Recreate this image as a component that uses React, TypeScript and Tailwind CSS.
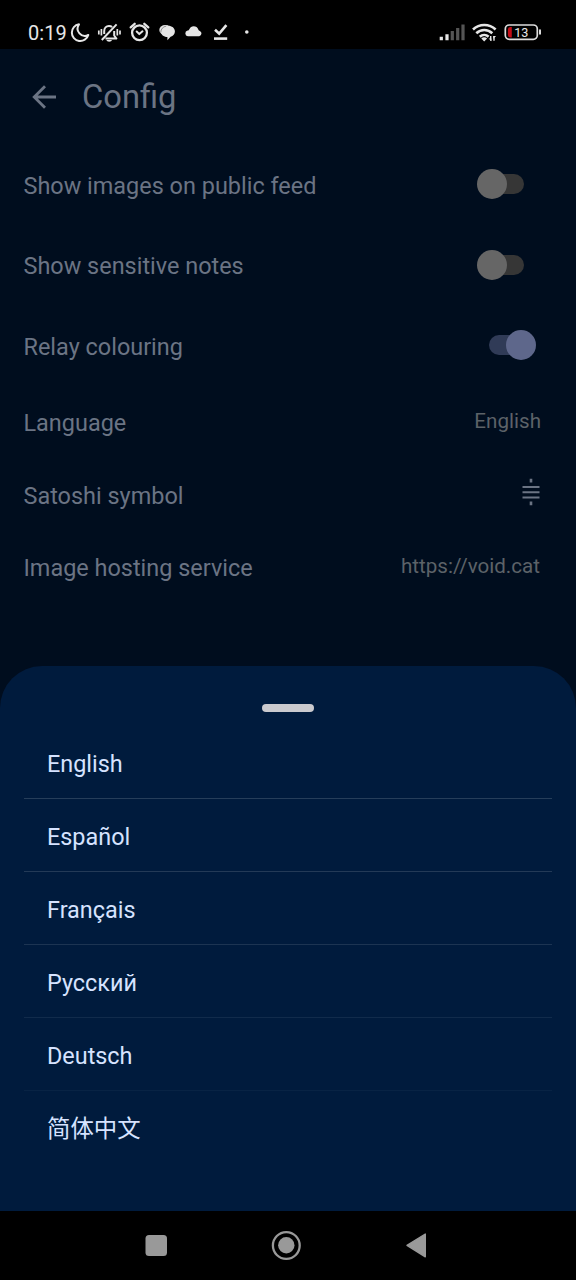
import type { ReactNode } from 'react';

function StatusBar() {
  return (
    <header className="flex h-[49px] shrink-0 items-start bg-black pl-[28px] text-[#e6e6e6]">
      <span className="mt-[20px] w-[42px] whitespace-nowrap text-[20px] leading-[26px] tracking-[0.1px]">0:19</span>
      <svg className="mt-[14px]" width="190" height="35" viewBox="70 14 190 35" fill="none" stroke="#e6e6e6" strokeWidth="2" strokeLinecap="round" strokeLinejoin="round">
        <path d="M79 24.3A8.4 8.4 0 1 0 88.3 35 7.3 7.3 0 0 1 79 24.3Z" />
        <g strokeLinecap="butt">
          <path d="M104.2 34V31.2c0-3 2-5.2 4.8-5.2 1.3 0 2.3.4 3.1 1.1M114.2 31V35.5l2.2 3H105.5" />
          <path d="M101.8 40L116.6 24.4" />
          <path d="M101.4 29v6.5M98.8 30.5v4M117.3 29v6.5M120 30.5v4" strokeWidth="1.7" />
        </g>
        <path d="M106.3 40h5.8a3 2.2 0 0 1-5.8 0Z" fill="#e6e6e6" stroke="none" />
        <circle cx="139.5" cy="32.8" r="7.4" strokeWidth="2.3" />
        <path d="M130.7 27.4l4-3.6M148.3 27.4l-4-3.6" strokeWidth="2.3" />
        <path d="M136.7 31.5l2.6 2.6 3.2-2.8" />
        <g stroke="none" fill="#e6e6e6">
          <ellipse cx="165.3" cy="30" rx="6" ry="5" />
          <path d="M168 25.8c4 0 6.9 2.4 6.9 5.6 0 2.5-1.7 4.6-4.3 5.4L167.4 40.2V37c-3.8-.2-6.5-2.5-6.5-5.6 0-3.2 3-5.6 7.1-5.6Z" />
          <path d="M187.8 36.3a2.9 2.9 0 0 1-.2-5.7c.9-.1 1.3-.3 1.7-1.3.8-1.9 2.4-3 4.4-3 2.2 0 3.8 1.2 4.6 3.2.3.8.9 1.1 1.6 1.4a2.9 2.9 0 0 1-.7 5.4Z" />
          <path d="M214 37.3h13.2v2.6H214z" />
          <circle cx="246.8" cy="32" r="1.8" />
        </g>
        <path d="M160.8 32c0-3 2-5.2 5-5.8" stroke="#555" strokeWidth="0.6" />
        <path d="M215 29.7l4.2 4 7.2-8.5" strokeWidth="2.6" strokeLinecap="butt" strokeLinejoin="miter" />
      </svg>
      <svg className="mt-[14px] ml-auto" width="146" height="35" viewBox="430 14 146 35" fill="none">
        <path d="M441.3 36.7v3.5M447 34.2v6" stroke="#e6e6e6" strokeWidth="3.2" />
        <path d="M452.3 31v9.2M457.7 28v12.2M463 24.5v15.7" stroke="#555" strokeWidth="3.2" />
        <g stroke="#e6e6e6" strokeWidth="2.6">
          <path d="M473 29.5c6.4-6 16.2-6 22.6 0" />
          <path d="M476.3 33.2c4.6-4.3 11.4-4.3 16 0" />
          <path d="M479.8 36.8c2.6-2.4 6.3-2.4 8.8 0" />
        </g>
        <path d="M481.3 38.4c1.7-1.6 4.1-1.6 5.8 0l-2.9 3Z" fill="#e6e6e6" />
        <path d="M490.7 36v4.8M494 36v4.8" stroke="#e6e6e6" strokeWidth="1.4" />
        <path d="M488.6 38.4h2.8v2.8ZM493.3 38.8V36h2.8Z" fill="#e6e6e6" />
        <rect x="505.3" y="25" width="32" height="14.3" rx="4" stroke="#dcdcdc" strokeWidth="1.7" />
        <path d="M511.8 27v10.4h-1.4a2.5 2.5 0 0 1-2.5-2.5v-5.4a2.5 2.5 0 0 1 2.5-2.5Z" fill="#c40c16" />
        <path d="M540 30.2v3.5" stroke="#dcdcdc" strokeWidth="2" strokeLinecap="round" />
        <text x="521.3" y="36.8" fill="#e6e6e6" fontSize="12.6" textAnchor="middle">13</text>
      </svg>
    </header>
  );
}

function Toggle({ on = false }: { on?: boolean }) {
  return on ? (
    <span className="mr-[40px] mb-[3px] flex h-[29px] w-[47px] items-center">
      <span className="flex h-[20px] w-[38px] items-center rounded-full bg-[#303b57]">
        <span className="ml-[17px] size-[30px] shrink-0 rounded-full bg-[#5e678b]" />
      </span>
    </span>
  ) : (
    <span className="mr-[52px] mb-[3px] flex h-[29px] w-[47px] items-center justify-end">
      <span className="flex h-[20px] w-[38px] items-center justify-end rounded-full bg-[#363636]">
        <span className="mr-[17px] size-[30px] shrink-0 rounded-full bg-[#666666]" />
      </span>
    </span>
  );
}

function Row({ label, tall = false, children }: { label: string; tall?: boolean; children: ReactNode }) {
  return (
    <div className={tall ? 'flex h-[80.5px] items-center justify-between pl-[23.5px]' : 'flex h-[72.5px] items-center justify-between pl-[23.5px]'}>
      <span className="text-[23.45px] leading-[32px] text-[#6b7484]">{label}</span>
      {children}
    </div>
  );
}

const languages = [
  { name: 'English', line: 'border-[#263e5a]' },
  { name: 'Español', line: 'border-[#233a57]' },
  { name: 'Français', line: 'border-[#1c3452]' },
  { name: 'Русский', line: 'border-[#112b4b]' },
  { name: 'Deutsch', line: 'border-[#082344]' },
  { name: '简体中文', line: 'border-transparent' },
];

export default function App() {
  return (
    <div className="flex h-[1280px] w-[576px] flex-col overflow-hidden bg-[#000d1e] font-['Roboto','Noto_Sans_CJK_SC',sans-serif]">
      <StatusBar />
      <main className="h-[617px] shrink-0">
        <div className="flex h-[96.5px] items-center pl-[32px]">
          <svg width="25" height="24" viewBox="0 0 25 24" fill="none" stroke="#6b7484" strokeWidth="2.8">
            <path d="M13 1.2L2.2 12 13 22.8M2.5 12H24" />
          </svg>
          <h1 className="ml-[25px] text-[32.7px] leading-[40px] text-[#6b7484]">Config</h1>
        </div>
        <Row label="Show images on public feed" tall><Toggle /></Row>
        <Row label="Show sensitive notes" tall><Toggle /></Row>
        <Row label="Relay colouring" tall><Toggle on /></Row>
        <Row label="Language">
          <span className="mr-[35px] mb-[5px] text-[20.6px] leading-[28px] text-[#5c6268]">English</span>
        </Row>
        <Row label="Satoshi symbol">
          <svg className="mr-[36.5px] mb-[7px]" width="18" height="28" viewBox="0 0 18 28" stroke="#6b7484" strokeWidth="2">
            <path d="M.5 9H17.5M.5 14.2H17.5M.5 19.4H17.5" />
            <path d="M9 .8V4.6M9 23.4V27.2" strokeWidth="2.6" />
          </svg>
        </Row>
        <Row label="Image hosting service">
          <span className="mr-[36px] mb-[5px] text-[20.6px] leading-[28px] text-[#5c6268]">https://void.cat</span>
        </Row>
      </main>
      <section className="h-[545px] shrink-0 rounded-t-[42px] bg-[#001b3d] px-[24px] pt-[38px]">
        <div className="mx-auto h-[8px] w-[52px] rounded-full bg-[#cacace]" />
        <ul className="mt-[14px]">
          {languages.map(({ name, line }) => (
            <li key={name} className={`flex h-[73px] items-center border-b pt-[4px] pl-[23px] text-[23.4px] leading-[32px] text-[#d6e3ff] ${line}`}>
              {name}
            </li>
          ))}
        </ul>
      </section>
      <nav className="h-[69px] shrink-0 bg-black">
        <svg width="576" height="69" viewBox="0 1211 576 69" fill="#999">
          <rect x="145.5" y="1235" width="21.5" height="21" rx="3.5" />
          <circle cx="286.3" cy="1245.5" r="13.4" fill="none" stroke="#999" strokeWidth="2.3" />
          <circle cx="286.3" cy="1245.3" r="8.2" />
          <path d="M407 1245.3L425.3 1234v22.8Z" stroke="#999" strokeWidth="1.4" strokeLinejoin="round" />
        </svg>
      </nav>
    </div>
  );
}
